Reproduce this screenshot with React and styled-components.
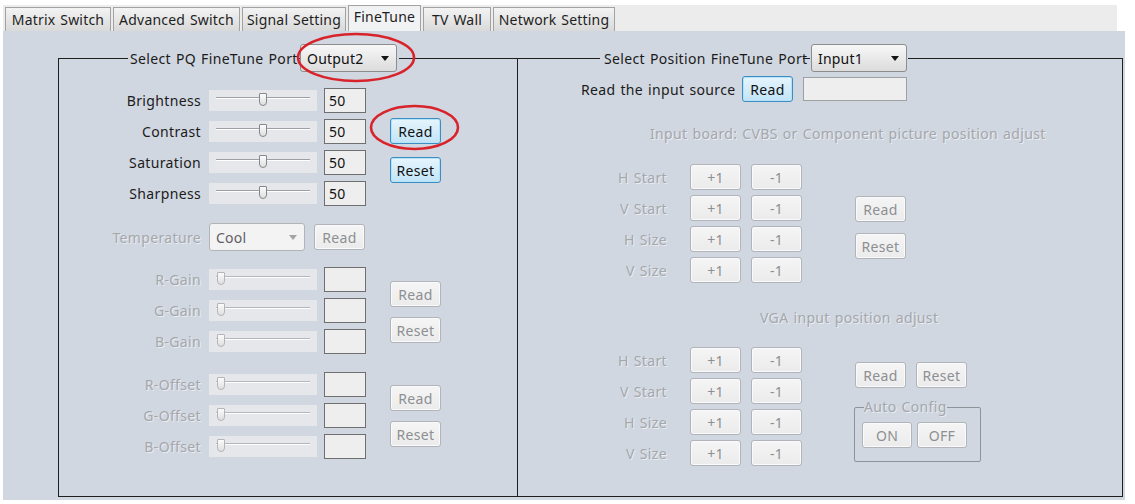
import React from "react";
import styled, { createGlobalStyle, css } from "styled-components";

const Global = createGlobalStyle`
  html, body { margin: 0; padding: 0; background: #ffffff; }
  * { box-sizing: border-box; }
`;

const FONT = `"Noto Sans", "Open Sans", "Liberation Sans", sans-serif`;
const DIS = "#a4a7ac";

const Root = styled.div`
  position: relative;
  width: 1135px;
  height: 504px;
  padding: 5px 0 0 3px;
  background: #ffffff;
  font-family: ${FONT};
  font-size: 14px;
  letter-spacing: 0.35px;
  word-spacing: 1px;
  color: #1b1b1b;
  overflow: hidden;
`;

const TabBar = styled.div`
  display: flex;
  align-items: flex-end;
  gap: 2px;
  width: 1114px;
  height: 26px;
  padding-left: 2px;
  background: #ececec;
`;

const Tab = styled.div`
  width: ${(p) => p.$w}px;
  height: ${(p) => (p.$active ? 26 : 24)}px;
  border: 1px solid #a2a2a2;
  border-bottom: none;
  background: ${(p) =>
    p.$active ? "#f1f2f4" : "linear-gradient(#f3f3f3, #d9d9d9)"};
  display: flex;
  align-items: center;
  justify-content: center;
  padding-bottom: ${(p) => (p.$active ? 4 : 1)}px;
  white-space: nowrap;
  letter-spacing: 0.2px;
  color: #1e1e1e;
`;

const Panel = styled.div`
  display: flex;
  width: 1122px;
  height: 469px;
  padding: 13px 0 0 55px;
  background: #d1d7e1;
`;

const Group = styled.fieldset`
  margin: 0;
  padding: 0;
  min-width: 0;
  width: ${(p) => p.$w}px;
  height: 453px;
  border: 1px solid #1f1f1f;
  ${(p) => p.$noLeft && css`border-left: none;`}
`;

const Legend = styled.legend`
  margin-left: ${(p) => p.$ml}px;
  padding: 0 ${(p) => p.$pr}px 0 ${(p) => p.$pl}px;
`;

const LegendInner = styled.span`
  display: inline-flex;
  align-items: center;
  height: 28px;
  white-space: nowrap;
`;

const LegendText = styled.span`
  width: ${(p) => p.$w}px;
  white-space: nowrap;
`;

const Dash = styled.span`
  display: inline-block;
  width: ${(p) => p.$w}px;
  height: 1px;
  margin: 0 ${(p) => p.$m}px;
  background: #1f1f1f;
`;

const Select = styled.div`
  width: ${(p) => p.$w}px;
  height: 28px;
  display: flex;
  align-items: center;
  justify-content: space-between;
  padding: 0 7px 0 6px;
  border-radius: 3px;
  border: 1px solid ${(p) => (p.$disabled ? "#b2b4b7" : "#8d8d8d")};
  background: ${(p) =>
    p.$disabled ? "#f3f3f3" : "linear-gradient(#f7f7f7, #dcdcdc)"};
  color: ${(p) => (p.$disabled ? "#5f6063" : "#111")};
  margin-left: ${(p) => p.$ml || 0}px;
  flex-shrink: 0;
  letter-spacing: 0.2px;
`;

const Arrow = styled.span`
  width: 0;
  height: 0;
  border-left: 4px solid transparent;
  border-right: 4px solid transparent;
  border-top: 5px solid ${(p) => (p.$disabled ? "#a3a3a3" : "#141414")};
`;

const Body = styled.div`
  display: flex;
  flex-direction: column;
  padding-top: ${(p) => p.$pt}px;
`;

const Section = styled.div`
  display: flex;
  align-items: flex-start;
  margin-top: ${(p) => p.$mt || 0}px;
  padding-left: ${(p) => p.$pl || 0}px;
`;

const Rows = styled.div`
  display: flex;
  flex-direction: column;
  gap: ${(p) => p.$gap}px;
`;

const Row = styled.div`
  display: flex;
  align-items: center;
  height: ${(p) => p.$h}px;
  margin-top: ${(p) => p.$mt || 0}px;
  padding-left: ${(p) => p.$pl || 0}px;
`;

const Label = styled.span`
  width: ${(p) => p.$w}px;
  flex-shrink: 0;
  text-align: ${(p) => p.$align || "right"};
  white-space: nowrap;
  color: ${(p) => (p.$disabled ? DIS : "#1b1b1b")};
  text-shadow: ${(p) =>
    p.$disabled ? "1px 1px 0 rgba(255,255,255,0.55)" : "none"};
`;

const Slider = styled.div`
  position: relative;
  width: 108px;
  height: 21px;
  margin-left: 8px;
  padding: 7px 7px 0;
  background: #e5e7ea;
  flex-shrink: 0;
`;

const Groove = styled.div`
  height: 0;
  border-top: 1px solid ${(p) => (p.$disabled ? "#b4b6b9" : "#9d9fa2")};
  border-bottom: 1px solid #ffffff;
`;

const Thumb = styled.span`
  position: absolute;
  top: 3px;
  left: ${(p) => p.$pos}px;
  width: 8px;
  height: 13px;
  border: 1px solid ${(p) => (p.$disabled ? "#b3b5b8" : "#85878a")};
  border-radius: 1px 1px 4px 4px;
  background: linear-gradient(#fbfbfb, #dfdfdf);
`;

const ValueBox = styled.div`
  width: ${(p) => p.$w || 42}px;
  height: ${(p) => p.$h || 25}px;
  margin-left: ${(p) => p.$ml ?? 7}px;
  padding-left: 4px;
  display: flex;
  align-items: center;
  border: 1px solid ${(p) => p.$border || "#6f6f6f"};
  background: #eeeeee;
  color: #111;
  flex-shrink: 0;
`;

const Stack = styled.div`
  display: flex;
  flex-direction: ${(p) => p.$dir || "column"};
  gap: ${(p) => p.$gap}px;
  margin-left: ${(p) => p.$ml}px;
  padding-top: ${(p) => p.$pt || 0}px;
`;

const Button = styled.button`
  width: ${(p) => p.$w || 51}px;
  height: 26px;
  margin: 0;
  margin-left: ${(p) => p.$ml || 0}px;
  padding: 0;
  display: flex;
  align-items: center;
  justify-content: center;
  font-family: ${FONT};
  font-size: 14px;
  letter-spacing: 0.3px;
  border-radius: 3px;
  flex-shrink: 0;
  ${(p) =>
    p.$blue
      ? css`
          border: 1px solid #3d8dc5;
          box-shadow: inset 0 0 0 1px #b6e2f7;
          background: linear-gradient(#e6f5fd, #c1e4f7);
          color: #111;
        `
      : css`
          border: 1px solid #b1b4b8;
          box-shadow: inset 0 0 0 1px #fafafa;
          background: linear-gradient(#f5f5f5, #ebebeb);
          color: #8d8f92;
        `}
`;

const Title = styled.div`
  margin-top: ${(p) => p.$mt}px;
  padding-left: ${(p) => p.$pl}px;
  line-height: 20px;
  white-space: nowrap;
  color: ${DIS};
  text-shadow: 1px 1px 0 rgba(255, 255, 255, 0.55);
`;

const MiniGroup = styled.fieldset`
  margin: 11px 0 0 -1px;
  padding: 0 0 0 7px;
  min-width: 0;
  width: 127px;
  height: 63px;
  border: 1px solid #8f9398;
  border-radius: 2px;
`;

const MiniLegend = styled.legend`
  margin-left: 2px;
  padding: 0;
  font-size: 14px;
  line-height: 16px;
  color: ${DIS};
  text-shadow: 1px 1px 0 rgba(255, 255, 255, 0.55);
`;

const MiniButtons = styled.div`
  display: flex;
  gap: 5px;
  margin-top: 7px;
`;

const Mark = styled.svg`
  position: absolute;
  left: ${(p) => p.$x}px;
  top: ${(p) => p.$y}px;
  overflow: visible;
  pointer-events: none;
`;

const tabs = [
  ["Matrix Switch", 106],
  ["Advanced Switch", 127],
  ["Signal Setting", 104],
  ["FineTune", 73, true],
  ["TV Wall", 68],
  ["Network Setting", 122],
];

function SliderRow({ label, value, disabled }) {
  return (
    <Row $h={25}>
      <Label $w={142} $disabled={disabled}>
        {label}
      </Label>
      <Slider>
        <Groove $disabled={disabled} />
        <Thumb $pos={disabled ? 8 : 50} $disabled={disabled} />
      </Slider>
      <ValueBox>{value}</ValueBox>
    </Row>
  );
}

function SliderSection({ items, mt, pt, gap, blue, disabled }) {
  return (
    <Section $mt={mt}>
      <Rows $gap={6}>
        {items.map(([l, v]) => (
          <SliderRow key={l} label={l} value={v} disabled={disabled} />
        ))}
      </Rows>
      <Stack $gap={gap} $ml={24} $pt={pt}>
        <Button $blue={blue}>Read</Button>
        <Button $blue={blue}>Reset</Button>
      </Stack>
    </Section>
  );
}

function PosRows() {
  return (
    <Rows $gap={5}>
      {["H Start", "V Start", "H Size", "V Size"].map((l) => (
        <Row key={l} $h={26}>
          <Label $w={90} $disabled>
            {l}
          </Label>
          <Button $ml={23}>+1</Button>
          <Button $ml={10}>-1</Button>
        </Row>
      ))}
    </Rows>
  );
}

export default function App() {
  return (
    <Root>
      <Global />
      <TabBar>
        {tabs.map(([t, w, a]) => (
          <Tab key={t} $w={w} $active={a}>
            {t}
          </Tab>
        ))}
      </TabBar>
      <Panel>
        <Group $w={460}>
          <Legend $ml={69} $pl={2} $pr={2}>
            <LegendInner>
              <LegendText $w={168}>Select PQ FineTune Port</LegendText>
              <Dash $w={2} $m={0} />
              <Select $w={97}>
                Output2<Arrow />
              </Select>
            </LegendInner>
          </Legend>
          <Body $pt={16}>
            <SliderSection
              items={[
                ["Brightness", 50],
                ["Contrast", 50],
                ["Saturation", 50],
                ["Sharpness", 50],
              ]}
              pt={30}
              gap={13}
              blue
            />
            <Row $h={28} $mt={17}>
              <Label $w={142} $disabled>
                Temperature
              </Label>
              <Select $w={96} $ml={8} $disabled>
                Cool<Arrow $disabled />
              </Select>
              <Button $ml={9}>Read</Button>
            </Row>
            <SliderSection
              items={[
                ["R-Gain", ""],
                ["G-Gain", ""],
                ["B-Gain", ""],
              ]}
              mt={16}
              pt={14}
              gap={10}
              disabled
            />
            <SliderSection
              items={[
                ["R-Offset", ""],
                ["G-Offset", ""],
                ["B-Offset", ""],
              ]}
              mt={18}
              pt={13}
              gap={10}
              disabled
            />
          </Body>
        </Group>
        <Group $w={605} $noLeft>
          <Legend $ml={82} $pl={4} $pr={1}>
            <LegendInner>
              <LegendText $w={198}>Select Position FineTune Port</LegendText>
              <Dash $w={7} $m={1} />
              <Select $w={96}>
                Input1<Arrow />
              </Select>
            </LegendInner>
          </Legend>
          <Body $pt={4}>
            <Row $h={26} $pl={63}>
              <Label $w={153} $align="left">
                Read the input source
              </Label>
              <Button $blue $ml={8}>
                Read
              </Button>
              <ValueBox $w={104} $h={24} $ml={10} $border="#9ea0a3" />
            </Row>
            <Title $mt={22} $pl={132}>
              Input board: CVBS or Component picture position adjust
            </Title>
            <Section $mt={20} $pl={59}>
              <PosRows />
              <Stack $gap={11} $ml={53} $pt={32}>
                <Button>Read</Button>
                <Button>Reset</Button>
              </Stack>
            </Section>
            <Title $mt={25} $pl={242}>
              VGA input position adjust
            </Title>
            <Section $mt={19} $pl={59}>
              <PosRows />
              <Stack $gap={0} $ml={53} $pt={15}>
                <Stack $dir="row" $gap={10} $ml={0}>
                  <Button>Read</Button>
                  <Button>Reset</Button>
                </Stack>
                <MiniGroup>
                  <MiniLegend>Auto Config</MiniLegend>
                  <MiniButtons>
                    <Button $w={50}>ON</Button>
                    <Button $w={50}>OFF</Button>
                  </MiniButtons>
                </MiniGroup>
              </Stack>
            </Section>
          </Body>
        </Group>
      </Panel>
      <Mark $x={297} $y={33} width="118" height="49" viewBox="0 0 118 49">
        <ellipse cx="59" cy="24.5" rx="58" ry="23.5" fill="none" stroke="#d8232b" strokeWidth="2.6" />
      </Mark>
      <Mark $x={370} $y={105} width="89" height="45" viewBox="0 0 89 45">
        <ellipse cx="44.5" cy="22.5" rx="43.5" ry="21.5" fill="none" stroke="#d8232b" strokeWidth="2.6" />
      </Mark>
    </Root>
  );
}
